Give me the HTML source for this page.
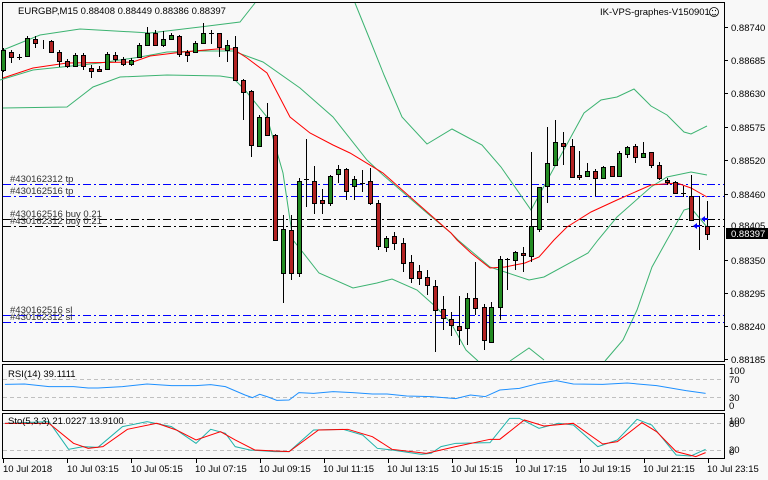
<!DOCTYPE html>
<html><head><meta charset="utf-8"><style>
html,body{margin:0;padding:0;background:#f8f8f8;}
svg{display:block;font-family:"Liberation Sans",sans-serif;font-size:9.5px;}
</style></head><body>
<svg width="768" height="480" viewBox="0 0 768 480" xmlns="http://www.w3.org/2000/svg">
<rect width="768" height="480" fill="#f8f8f8"/>
<!-- panel frames -->
<rect x="2.5" y="2.5" width="722" height="359" fill="#f8f8f8" stroke="#000"/>
<rect x="2.5" y="364.5" width="722" height="46" fill="#f8f8f8" stroke="#000"/>
<rect x="2.5" y="413.5" width="722" height="45" fill="#f8f8f8" stroke="#000"/>

<!-- horizontal order lines -->
<g stroke-dasharray="8,3,2,3" stroke-width="1">
<line x1="3" y1="184.5" x2="724" y2="184.5" stroke="#0000ff"/>
<line x1="3" y1="196.5" x2="724" y2="196.5" stroke="#0000ff"/>
<line x1="3" y1="219.5" x2="724" y2="219.5" stroke="#000"/>
<line x1="3" y1="226.5" x2="724" y2="226.5" stroke="#000"/>
<line x1="3" y1="315.5" x2="724" y2="315.5" stroke="#0000ff"/>
<line x1="3" y1="322.5" x2="724" y2="322.5" stroke="#0000ff"/>
</g>
<g fill="#333">
<text x="10" y="182">#430162312 tp</text>
<text x="10" y="194">#430162516 tp</text>
<text x="10" y="217">#430162516 buy 0.21</text>
<text x="10" y="224">#430162312 buy 0.21</text>
<text x="10" y="313">#430162516 sl</text>
<text x="10" y="320">#430162312 sl</text>
</g>

<!-- bands -->
<g fill="none" stroke="#3cb371" stroke-width="1">
<polyline points="3,50 40,35 80,29 150,33 200,27 240,22 255,3"/>
<polyline points="355,3 370,40 382,70 384,75 402,117 427,144 452,129 482,145 501,167 531,210 584,113 601,100 617,97 634,89 651,106 667,115 684,132 691,134 707,126"/>
<polyline points="0,80 33,70 100,63 140,57 167,52 200,51 233,51 263,62 300,88 333,117 367,160 383,175 427,213 451,233 458,240 490,267 529,280 544,277 588,253 598,240 617,217 651,187 667,177 691,172 707,175"/>
<polyline points="3,108 67,107 80,97 93,87 120,77 167,75 220,76 233,78 245,90 267,117 283,173 293,240 301,250 319,273 353,288 377,283 392,279 417,290 436,307 451,323 466,350 478,361"/>
<polyline points="510,361 529,348 544,360"/>
<polyline points="605,361 623,340 637,310 652,267 667,240 684,210 691,208 707,227"/>
</g>
<polyline fill="none" stroke="#ff0000" stroke-width="1" points="3,78 33,68 67,63 133,62 150,56 183,52 217,49 233,49 247,58 267,73 290,117 310,133 333,145 350,153 383,173 417,203 451,233 457,240 471,253 490,268 505,267 525,263 539,257 554,240 567,227 591,212 617,200 651,185 677,183 691,188 707,197"/>

<!-- candles -->
<g id="c" stroke="#000" stroke-width="1">
<g stroke-width="1">
<path d="M3.5 48V72M11.5 50V63M19.5 54V60M27.5 36V57M35.5 36V48M43.5 40V49M51.5 40V52M59.5 50V67M67.5 59V68M75.5 53V67M83.5 53V70M91.5 65V78M99.5 66V72M107.5 52V70M115.5 52V62M123.5 57V66M131.5 58V66M139.5 43V58M147.5 27V46M155.5 30V46M163.5 31V47M171.5 33V40M179.5 35V57M187.5 50V62M195.5 41V53M203.5 23V44M211.5 30V44M219.5 33V57M227.5 40V62M235.5 36V81M243.5 79V120M251.5 90V157M259.5 115V147M267.5 103V136M275.5 134V241M283.5 215V303M291.5 215V280M299.5 178V277M306.5 139V207M314.5 166V214M322.5 189V214M330.5 175V206M338.5 165V183M346.5 168V200M354.5 176V200M362.5 170V192M370.5 168V205M378.5 200V250M386.5 236V252M394.5 232V250M403.5 238V272M411.5 255V283M419.5 265V285M427.5 270V295M435.5 280V352M443.5 296V330M451.5 312V336M459.5 296V345M467.5 293V345M475.5 262V315M484.5 304V350M491.5 302V342M500.5 256V320M507.5 258V290M515.5 251V270M523.5 247V272M531.5 152V262M539.5 187V232M547.5 127V203M555.5 120V165M563.5 132V165M572.5 139V177M579.5 151V180M587.5 163V177M595.5 169V196M603.5 166V179M612.5 166V177M619.5 151V177M627.5 146V158M635.5 144V163M643.5 142V158M651.5 152V168M659.5 162V180M667.5 178V185M675.5 181V193M683.5 186V197M691.5 175V221M699.5 196V250M707.5 201V240"/>
</g>
<g fill="#228b22">
<rect x="1.5" y="50.5" width="4" height="20"/><rect x="25.5" y="38.5" width="4" height="18"/><rect x="73.5" y="55.5" width="4" height="11"/><rect x="105.5" y="54.5" width="4" height="15"/><rect x="129.5" y="60.5" width="4" height="4"/><rect x="137.5" y="45.5" width="4" height="12"/><rect x="145.5" y="33.5" width="4" height="12"/><rect x="161.5" y="39.5" width="4" height="6"/><rect x="169.5" y="35.5" width="4" height="4"/><rect x="193.5" y="43.5" width="4" height="9"/><rect x="201.5" y="33.5" width="4" height="10"/><rect x="225.5" y="45.5" width="4" height="5"/><rect x="257.5" y="117.5" width="4" height="29"/><rect x="281.5" y="229.5" width="4" height="44"/><rect x="297.5" y="181.5" width="4" height="92"/><rect x="328.5" y="176.5" width="4" height="27"/><rect x="336.5" y="169.5" width="4" height="5"/><rect x="352.5" y="179.5" width="4" height="7"/><rect x="384.5" y="238.5" width="4" height="9"/><rect x="465.5" y="298.5" width="4" height="30"/><rect x="489.5" y="307.5" width="4" height="35"/><rect x="498.5" y="259.5" width="4" height="48"/><rect x="513.5" y="252.5" width="4" height="8"/><rect x="529.5" y="226.5" width="4" height="30"/><rect x="537.5" y="187.5" width="4" height="42"/><rect x="545.5" y="163.5" width="4" height="23"/><rect x="553.5" y="142.5" width="4" height="23"/><rect x="585.5" y="171.5" width="4" height="5"/><rect x="601.5" y="167.5" width="4" height="11"/><rect x="617.5" y="153.5" width="4" height="23"/><rect x="625.5" y="147.5" width="4" height="7"/><rect x="641.5" y="153.5" width="4" height="4"/>
</g>
<g fill="#b22222">
<rect x="9.5" y="52.5" width="4" height="5"/><rect x="33.5" y="39.5" width="4" height="4"/><rect x="49.5" y="41.5" width="4" height="11"/><rect x="57.5" y="52.5" width="4" height="9"/><rect x="65.5" y="61.5" width="4" height="5"/><rect x="81.5" y="55.5" width="4" height="11"/><rect x="89.5" y="68.5" width="4" height="3"/><rect x="97.5" y="69.5" width="4" height="2"/><rect x="113.5" y="55.5" width="4" height="4"/><rect x="121.5" y="59.5" width="4" height="5"/><rect x="153.5" y="33.5" width="4" height="12"/><rect x="177.5" y="36.5" width="4" height="18"/><rect x="185.5" y="52.5" width="4" height="3"/><rect x="217.5" y="33.5" width="4" height="14"/><rect x="233.5" y="47.5" width="4" height="33"/><rect x="241.5" y="80.5" width="4" height="12"/><rect x="249.5" y="91.5" width="4" height="54"/><rect x="265.5" y="117.5" width="4" height="18"/><rect x="273.5" y="135.5" width="4" height="105"/><rect x="289.5" y="230.5" width="4" height="43"/><rect x="312.5" y="181.5" width="4" height="22"/><rect x="320.5" y="200.5" width="4" height="3"/><rect x="344.5" y="169.5" width="4" height="22"/><rect x="368.5" y="181.5" width="4" height="22"/><rect x="376.5" y="203.5" width="4" height="43"/><rect x="392.5" y="236.5" width="4" height="7"/><rect x="401.5" y="243.5" width="4" height="20"/><rect x="409.5" y="262.5" width="4" height="16"/><rect x="417.5" y="271.5" width="4" height="7"/><rect x="425.5" y="277.5" width="4" height="8"/><rect x="433.5" y="286.5" width="4" height="24"/><rect x="441.5" y="309.5" width="4" height="9"/><rect x="449.5" y="319.5" width="4" height="6"/><rect x="457.5" y="326.5" width="4" height="4"/><rect x="473.5" y="298.5" width="4" height="10"/><rect x="482.5" y="307.5" width="4" height="33"/><rect x="521.5" y="253.5" width="4" height="2"/><rect x="561.5" y="143.5" width="4" height="3"/><rect x="570.5" y="146.5" width="4" height="31"/><rect x="577.5" y="175.5" width="4" height="2"/><rect x="593.5" y="171.5" width="4" height="7"/><rect x="610.5" y="166.5" width="4" height="10"/><rect x="633.5" y="146.5" width="4" height="11"/><rect x="649.5" y="152.5" width="4" height="13"/><rect x="657.5" y="165.5" width="4" height="13"/><rect x="665.5" y="180.5" width="4" height="2"/><rect x="673.5" y="182.5" width="4" height="11"/><rect x="689.5" y="196.5" width="4" height="24"/><rect x="705.5" y="226.5" width="4" height="8"/>
</g>
<path d="M17 57.5H22M209 33.5H214M304 179.5H309M360 183.5H365M505 259.5H510M681 193.5H686M697 225.5H702" />
</g>
<!-- arrows -->
<g fill="#0000ff">
<path d="M693 226l4-3v2h3v2h-3v2z"/>
<path d="M701 219l4-3v2h3v2h-3v2z"/>
</g>

<!-- RSI -->
<line x1="3" y1="379.5" x2="724" y2="379.5" stroke="#c0c0c0" stroke-dasharray="4,3"/>
<line x1="3" y1="397.5" x2="724" y2="397.5" stroke="#c0c0c0" stroke-dasharray="4,3"/>
<g transform="translate(0,240) scale(0.49,0.3333)">
<polyline fill="none" stroke="#1e90ff" stroke-width="1" vector-effect="non-scaling-stroke" points="10,433 50,432 100,440 150,440 180,444 200,444 250,440 300,432 350,437 400,437 430,434 460,440 500,465 515,473 530,463 545,470 565,481 590,480 610,458 640,460 680,455 720,458 760,462 790,462 830,468 880,470 930,476 960,465 990,470 1020,450 1060,445 1100,430 1135,422 1170,432 1230,433 1280,429 1340,437 1400,452 1440,460"/>
</g>
<text x="8" y="377" fill="#000">RSI(14) 39.1111</text>

<!-- Sto -->
<line x1="3" y1="423.5" x2="724" y2="423.5" stroke="#c0c0c0" stroke-dasharray="4,3"/>
<line x1="3" y1="450.5" x2="724" y2="450.5" stroke="#c0c0c0" stroke-dasharray="4,3"/>
<g transform="translate(0,240) scale(0.49,0.3333)" fill="none" stroke-width="1">
<polyline stroke="#20b2aa" vector-effect="non-scaling-stroke" points="10,550 100,545 140,628 170,620 200,622 250,560 300,545 350,560 400,610 430,568 460,580 480,620 510,630 560,635 590,635 640,570 700,568 740,585 770,625 800,630 860,643 880,640 900,620 930,610 1000,608 1040,535 1060,535 1100,565 1140,550 1170,555 1220,620 1260,600 1300,538 1330,555 1380,645 1410,648 1440,628"/>
<polyline stroke="#ff0000" vector-effect="non-scaling-stroke" points="10,550 100,550 150,610 180,625 210,620 260,568 320,550 360,570 400,600 450,575 480,600 520,630 590,635 650,570 710,568 760,590 800,628 870,640 930,620 1000,598 1020,598 1070,540 1110,558 1170,550 1230,612 1260,605 1310,548 1340,575 1380,635 1420,650 1440,638"/>
</g>
<text x="8" y="424" fill="#000">Sto(5,3,3) 21.0227 13.9100</text>

<!-- header -->
<text x="18" y="14" fill="#000">EURGBP,M15  0.88408 0.88449 0.88386 0.88397</text>
<text x="600" y="15" fill="#000">IK-VPS-graphes-V150901</text>
<g fill="none" stroke="#000" stroke-width="0.8"><circle cx="714" cy="12" r="4.5"/><path d="M712 14q2 2 4 0"/></g>
<circle cx="712.5" cy="10.5" r="0.6"/><circle cx="715.5" cy="10.5" r="0.6"/>

<!-- price axis -->
<g stroke="#000"><path d="M725 27.5h3M725 60.5h3M725 93.5h3M725 127.5h3M725 160.5h3M725 194.5h3M725 260.5h3M725 293.5h3M725 326.5h3M725 359.5h3"/></g>
<g fill="#000">
<text x="731" y="31">0.88740</text><text x="731" y="64">0.88685</text><text x="731" y="97">0.88630</text><text x="731" y="131">0.88575</text><text x="731" y="164">0.88520</text><text x="731" y="198">0.88460</text><text x="731" y="229">0.88405</text><text x="731" y="264">0.88350</text><text x="731" y="297">0.88295</text><text x="731" y="330">0.88240</text><text x="731" y="363">0.88185</text>
<text x="729" y="374">100</text><text x="729" y="383">70</text><text x="729" y="401">30</text><text x="729" y="409">0</text>
<text x="729" y="424">100</text><text x="729" y="427">80</text><text x="729" y="453">20</text><text x="729" y="455">0</text>
</g>
<rect x="726" y="228" width="42" height="11" fill="#000"/>
<text x="731" y="237" fill="#fff">0.88397</text>

<!-- time axis -->
<g stroke="#000"><path d="M3.5 459v4M67.5 459v4M131.5 459v4M196.5 459v4M260.5 459v4M324.5 459v4M388.5 459v4M452.5 459v4M516.5 459v4M580.5 459v4M644.5 459v4M708.5 459v4"/></g>
<g fill="#000">
<text x="3" y="472">10 Jul 2018</text><text x="67" y="472">10 Jul 03:15</text><text x="131" y="472">10 Jul 05:15</text><text x="195" y="472">10 Jul 07:15</text><text x="259" y="472">10 Jul 09:15</text><text x="323" y="472">10 Jul 11:15</text><text x="387" y="472">10 Jul 13:15</text><text x="451" y="472">10 Jul 15:15</text><text x="515" y="472">10 Jul 17:15</text><text x="579" y="472">10 Jul 19:15</text><text x="643" y="472">10 Jul 21:15</text><text x="707" y="472">10 Jul 23:15</text>
</g>
</svg>
</body></html>
